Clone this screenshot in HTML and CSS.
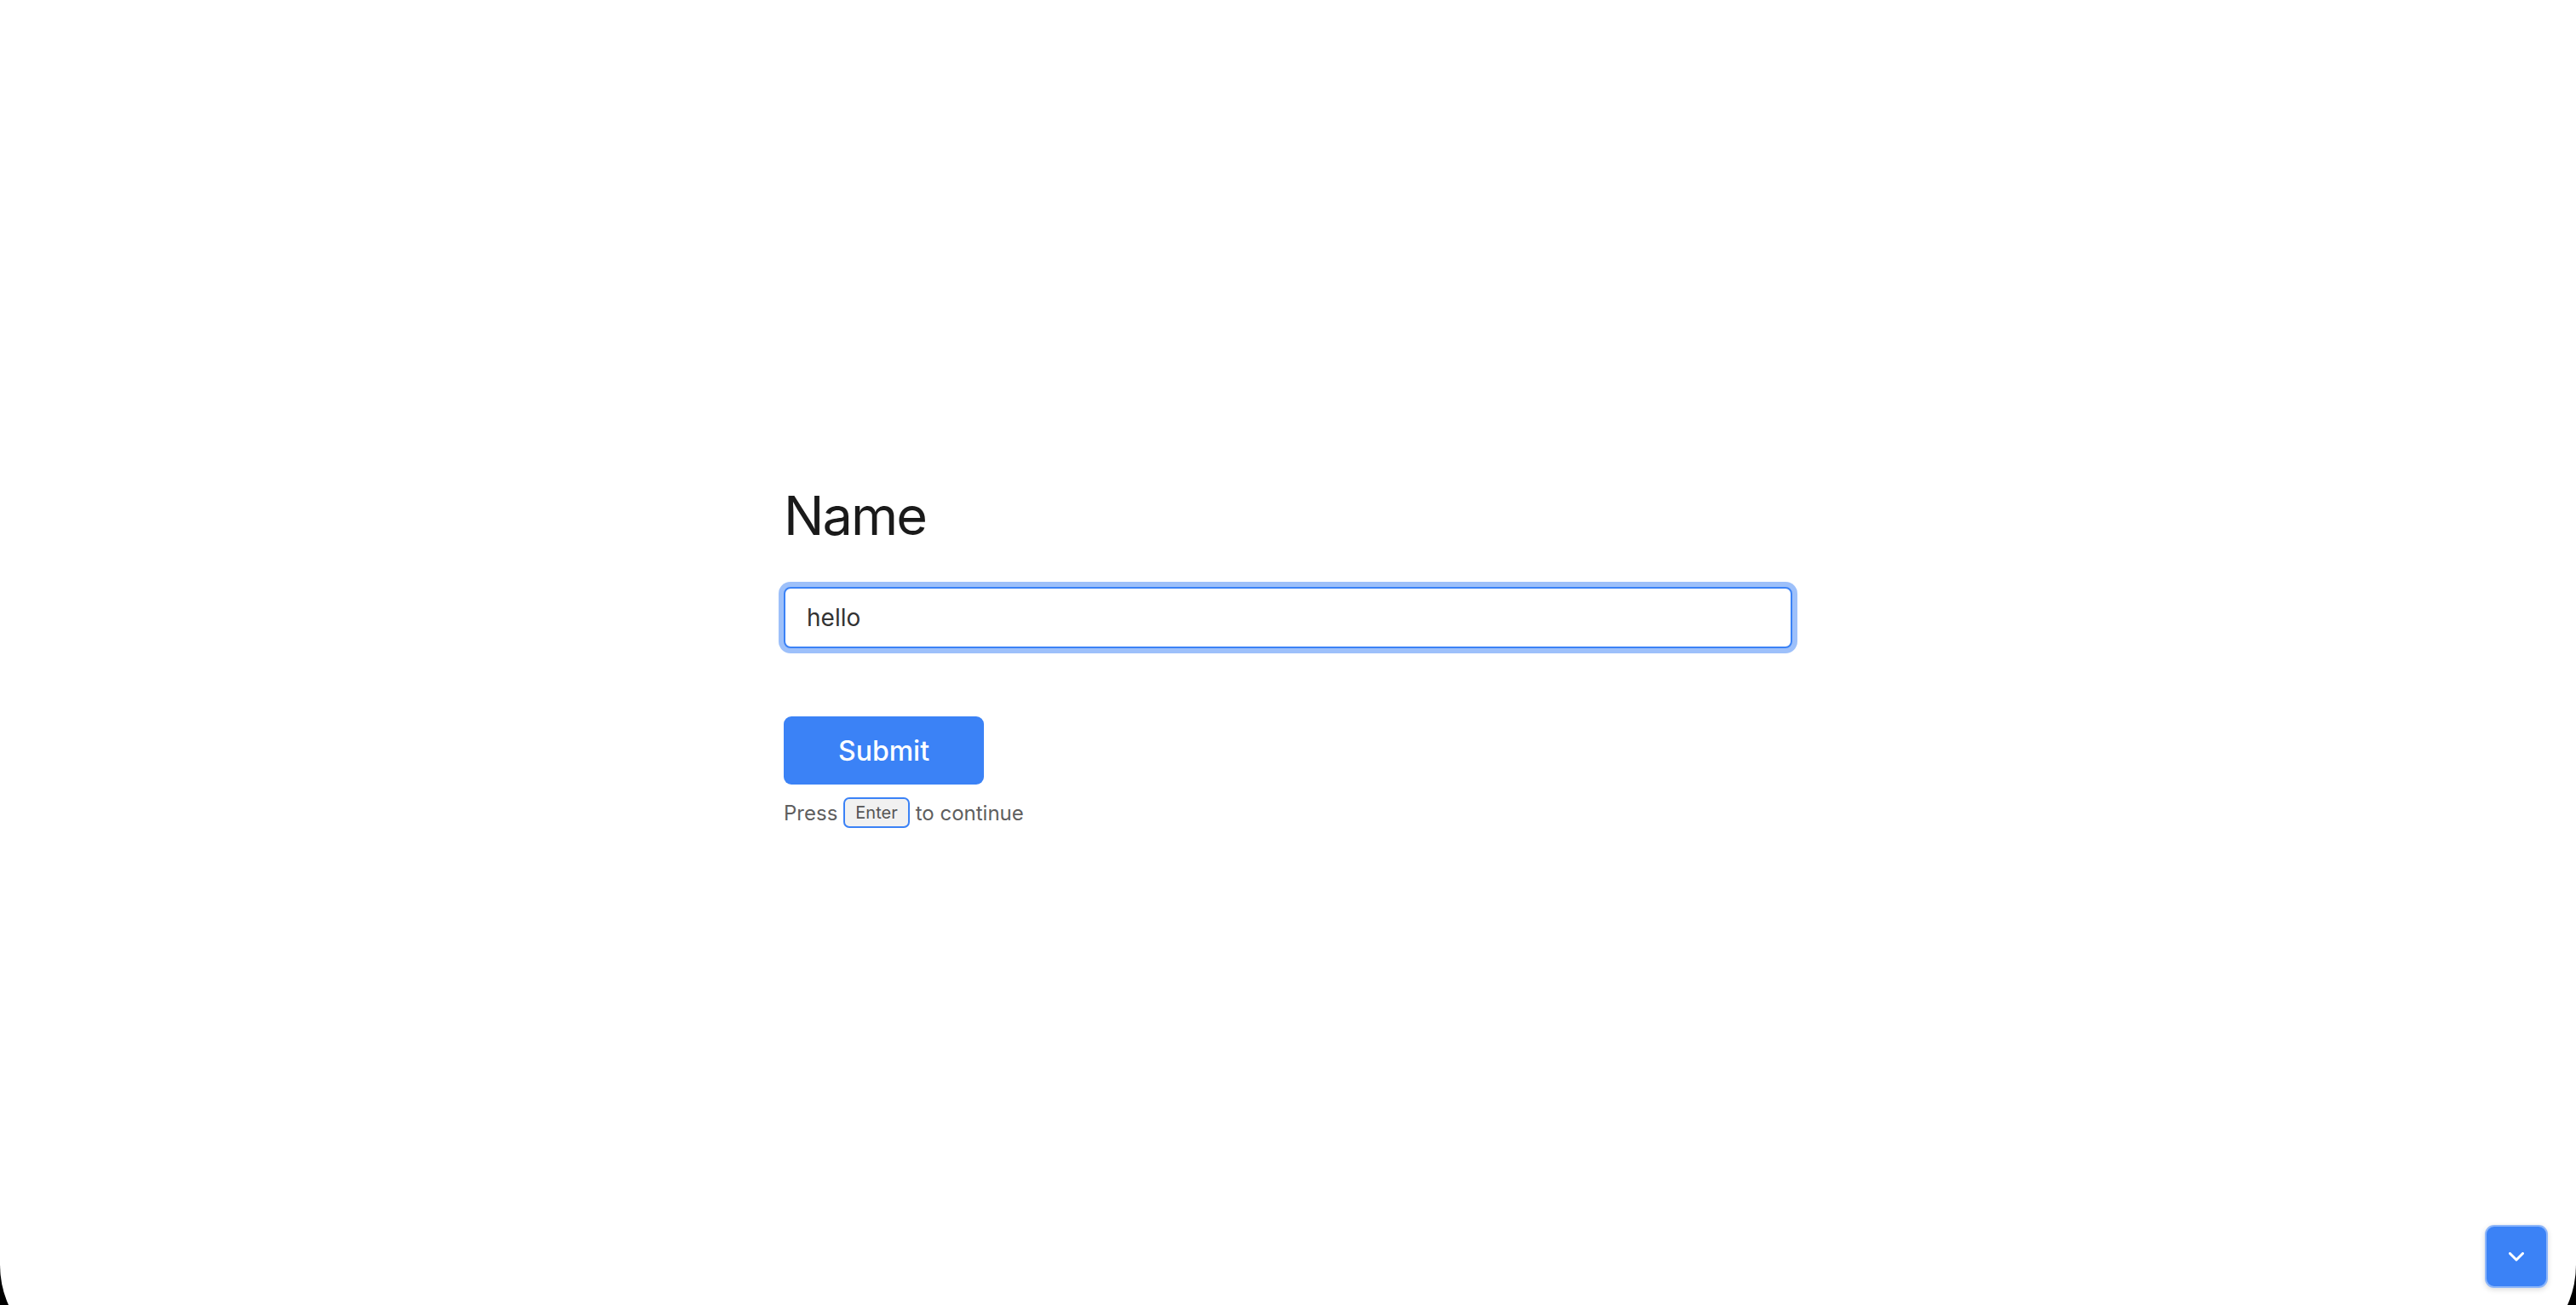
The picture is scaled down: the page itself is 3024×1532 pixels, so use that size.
FILE: index.html
```html
<!DOCTYPE html>
<html lang="en">
<head>
    <meta charset="UTF-8" />
    <meta name="viewport" content="width=device-width, initial-scale=1.0" />
    <title>Name</title>
    <link rel="stylesheet" href="styles.css">
</head>
<body>
    <div class="window">
        <main class="screen">
            <form class="question" onsubmit="return false">
                <h1>Name</h1>
                <input type="text" class="answer" value="hello" />
                <button type="submit" class="submit">Submit</button>
                <div class="hint">
                    <span>Press</span>
                    <kbd>Enter</kbd>
                    <span>to continue</span>
                </div>
            </form>
        </main>

        <button class="next" aria-label="Next question">
            <svg width="18" height="11" viewBox="0 0 18 11" fill="none">
                <path d="M1.5 1.5 L9 9 L16.5 1.5" stroke="#fff" stroke-width="3" stroke-linecap="round" stroke-linejoin="round" />
            </svg>
        </button>
    </div>
</body>
</html>
```

FILE: styles.css
```css
/* General Reset */
* {
    box-sizing: border-box;
    margin: 0;
    padding: 0;
}
html, body {
    height: 100%;
    overflow: hidden;
}
body {
    font-family: 'Inter', 'Roboto', sans-serif;
    background: #000;
}
.window {
    position: relative;
    height: 1600px;
    background: #fff;
    border-radius: 0 0 115px 115px;
}
.screen {
    height: 1532px;
    display: flex;
    align-items: center;
    justify-content: center;
}
.question {
    width: 1184px;
    display: flex;
    flex-direction: column;
    align-items: flex-start;
    padding-top: 7px;
}
h1 {
    font-size: 63px;
    font-weight: 400;
    line-height: 77px;
    letter-spacing: -0.03em;
    color: #1a1a1a;
    margin-bottom: 45px;
}
.answer {
    width: 100%;
    height: 72px;
    padding: 0 25px;
    font-family: inherit;
    font-size: 28px;
    color: #333;
    border: 2px solid #3b82f6;
    border-radius: 8px;
    outline: none;
    box-shadow: 0 0 0 6px rgba(59, 130, 246, 0.5);
}
.submit {
    margin-top: 80px;
    width: 235px;
    height: 80px;
    background: #3b82f6;
    color: #fff;
    font-family: inherit;
    font-size: 32px;
    font-weight: 500;
    border: none;
    border-radius: 9px;
    cursor: pointer;
}
.hint {
    margin-top: 15px;
    display: flex;
    align-items: center;
    gap: 7px;
    font-size: 24px;
    color: #5f5f5f;
}
kbd {
    display: inline-flex;
    align-items: center;
    height: 36px;
    padding: 0 12px;
    font-family: inherit;
    font-size: 20px;
    color: #555;
    background: #f1f1f1;
    border: 2px solid #3b82f6;
    border-radius: 7px;
}
.next {
    position: absolute;
    right: 33px;
    top: 1438px;
    width: 74px;
    height: 74px;
    display: flex;
    align-items: center;
    justify-content: center;
    background: #3b82f6;
    border: 2px solid #8db6fa;
    border-radius: 11px;
    box-shadow: 0 2px 6px rgba(0, 0, 0, 0.15);
    cursor: pointer;
}
```
